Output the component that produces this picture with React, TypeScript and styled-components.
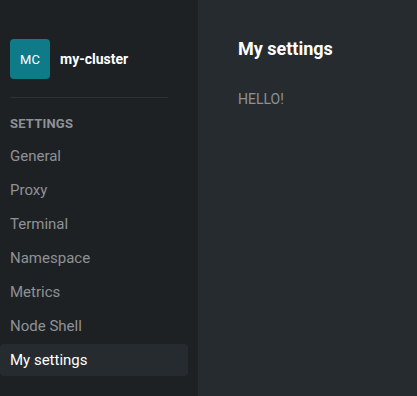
import React from "react"
import styled, { createGlobalStyle } from "styled-components"

const items = ["General", "Proxy", "Terminal", "Namespace", "Metrics", "Node Shell", "My settings"]

const GlobalStyle = createGlobalStyle`
    html, body {
        margin: 0;
        padding: 0;
        background: #262b2f;
        font-family: Roboto, "Liberation Sans", sans-serif;
    }
`

const App: React.FC = () => {
    const active = "My settings"

    return (
        <>
            <GlobalStyle />
            <Layout>
                <Sidebar>
                    <ClusterHeader>
                        <Avatar>MC</Avatar>
                        <ClusterName>my-cluster</ClusterName>
                    </ClusterHeader>
                    <Divider />
                    <SectionTitle>Settings</SectionTitle>
                    <Nav>
                        {items.map((item) => (
                            <NavItem key={item} active={item === active}>
                                {item}
                            </NavItem>
                        ))}
                    </Nav>
                </Sidebar>
                <Content>
                    <Heading>My settings</Heading>
                    <Message>HELLO!</Message>
                </Content>
            </Layout>
        </>
    )
}

const Layout = styled.div`
    display: flex;
    width: 417px;
    height: 396px;
    overflow: hidden;
`

const Sidebar = styled.aside`
    width: 198px;
    flex-shrink: 0;
    background: #1e2124;
    padding: 39px 10px 0 0;
    box-sizing: border-box;
`

const ClusterHeader = styled.div`
    display: flex;
    align-items: center;
    gap: 10px;
    padding-left: 10px;
`

const Avatar = styled.div`
    width: 40px;
    height: 40px;
    border-radius: 4px;
    background: #0f7a88;
    color: #ffffff;
    font-size: 13px;
    display: flex;
    align-items: center;
    justify-content: center;
`

const ClusterName = styled.div`
    color: #ffffff;
    font-size: 14px;
    font-weight: 700;
`

const Divider = styled.hr`
    border: none;
    border-top: 1px solid #2c3136;
    margin: 18px 20px 0 10px;
`

const SectionTitle = styled.div`
    padding-left: 10px;
    margin-top: 18px;
    text-transform: uppercase;
    color: #8e9297;
    font-size: 13px;
    font-weight: 700;
    letter-spacing: 0.2px;
`

const Nav = styled.nav`
    display: flex;
    flex-direction: column;
    gap: 2px;
    margin-top: 9px;
`

const NavItem = styled.div<{ active?: boolean }>`
    height: 32px;
    display: flex;
    align-items: center;
    padding-left: 10px;
    border-radius: 4px;
    font-size: 15px;
    color: ${({ active }) => (active ? "#ffffff" : "#8e9297")};
    background: ${({ active }) => (active ? "#262b2f" : "transparent")};
`

const Content = styled.main`
    flex: 1;
    padding: 38px 0 0 40px;
`

const Heading = styled.h1`
    margin: 0;
    color: #ffffff;
    font-size: 18px;
    font-weight: 700;
`

const Message = styled.p`
    margin: 32px 0 0;
    color: #8e9297;
    font-size: 14px;
`

export default App
